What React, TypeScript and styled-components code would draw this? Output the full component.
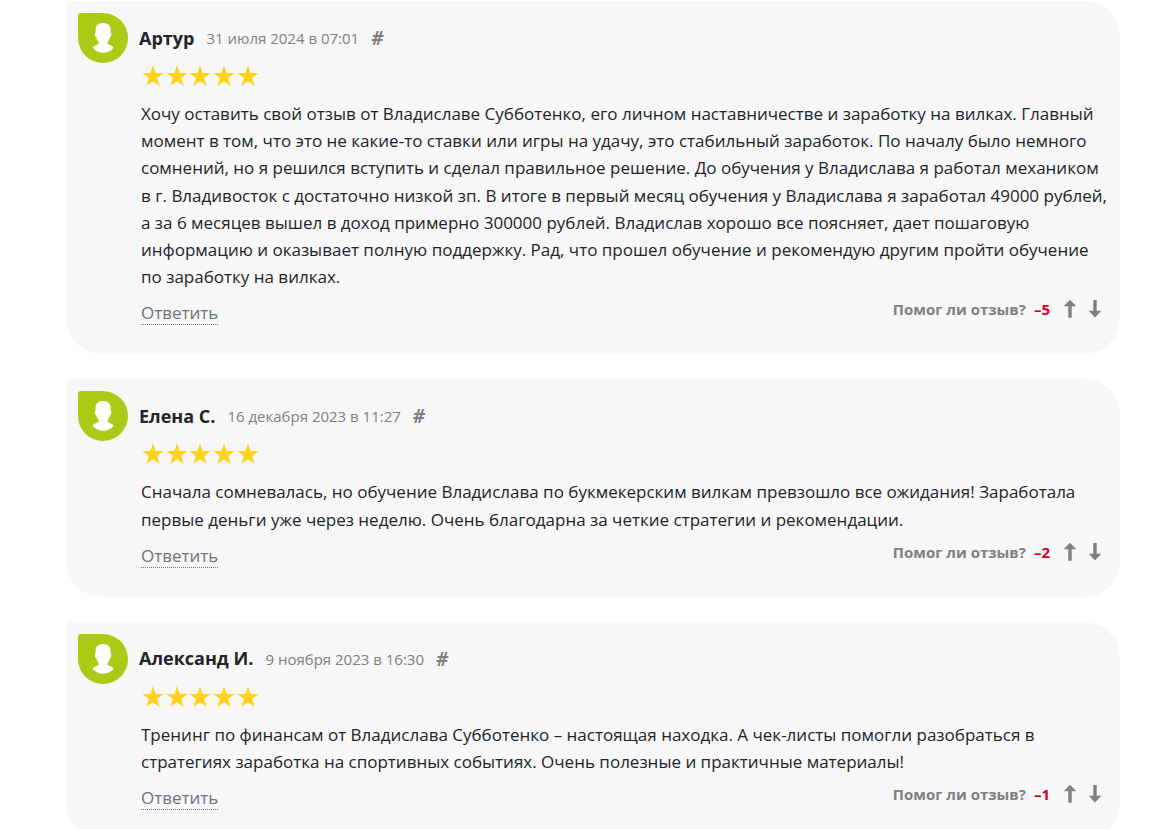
import React from "react";
import styled, { createGlobalStyle } from "styled-components";

const GlobalStyle = createGlobalStyle`
  * { box-sizing: border-box; }
  body {
    margin: 0;
    background: #fff;
    color: #212529;
    font-family: "Open Sans", "Noto Sans", sans-serif;
    font-size: 17px;
    line-height: 1.6;
  }
`;

const ReviewList = styled.main`
  display: flex;
  flex-direction: column;
  gap: 25px;
  padding: 1px 34px 25px 66px;
`;

const Card = styled.article`
  display: flex;
  gap: 11px;
  padding: 12px 12px 29px;
  background: #f7f7f7;
  border-radius: 5px 36px 36px 36px;
`;

const Avatar = styled.div`
  flex: none;
  width: 50px;
  height: 50px;
  background: #aacc17;
  border-radius: 3px 25px 25px 25px;
`;

const Body = styled.div`
  flex: 1;
  min-width: 0;
`;

const Header = styled.header`
  display: flex;
  align-items: center;
  height: 50px;
`;

const Author = styled.h2`
  margin: 0 12px 0 0;
  font-size: 18px;
  font-weight: 700;
`;

const PostedAt = styled.time`
  margin-right: 12px;
  color: #808080;
  font-size: 15px;
`;

const Permalink = styled.a`
  color: #808080;
  font-size: 19px;
  font-style: italic;
  font-weight: 700;
  line-height: 24px;
  text-decoration: none;
`;

const Stars = styled.svg`
  display: block;
  width: 119px;
  height: 24px;
  margin: 1px 0 12px 2px;
  fill: #ffd21e;
`;

const Text = styled.p`
  margin: 0;
  padding-left: 2px;
`;

const Footer = styled.footer`
  display: flex;
  align-items: flex-start;
  justify-content: space-between;
  margin-top: 9px;
  padding-left: 2px;
`;

const Reply = styled.a`
  margin-top: 2px;
  color: #6c757d;
  line-height: 23px;
  text-decoration: none;
  border-bottom: 1px dotted #6c757d;
`;

const Votes = styled.div`
  display: flex;
  align-items: center;
  height: 20px;
  padding-right: 6px;
  color: #808080;
  font-size: 15px;
  font-weight: 700;
`;

const Score = styled.span`
  margin: 0 13px 0 8px;
  color: #d0021b;
`;

const VoteButton = styled.button`
  display: flex;
  width: 14px;
  height: 20px;
  margin: 0;
  padding: 0;
  border: 0;
  background: none;
  color: inherit;
  cursor: pointer;

  & + & { margin-left: 11px; }
`;

const Person = () => (
  <svg width="50" height="50" viewBox="0 0 50 50" fill="#fff" aria-hidden="true">
    <path d="M25 10c-5.200 0-7.500 3-7.400 7.300v2.200c-.9.300-.9 1.300-.6 2.700.2 1.200.7 2 1.400 2.200.3 1.900 1 3.200 2.300 4.600v1.300c-.4 1.900-5.300 1.900-6 4.500C17.300 38.200 21.200 39.800 25.200 39.800s7.900-1.600 10.300-5c-.7-2.600-5.600-2.600-6-4.500v-1.300c1.300-1.400 2-2.700 2.300-4.600.7-.2 1.200-1 1.400-2.200.3-1.400.3-2.400-.6-2.700v-2.200C32.700 13 30.400 10 25 10z" />
  </svg>
);

const starOffsets = [0, 24, 47, 71, 95];

const Rating = () => (
  <Stars viewBox="0 0 119 24" role="img" aria-label="5 из 5">
    {starOffsets.map((x) => (
      <polygon
        key={x}
        transform={`translate(${x} 0)`}
        points="12,1 14.600,9 22.600,9 16.200,14 18.700,22 12,17.200 5.300,22 7.800,14 1.400,9 9.400,9"
      />
    ))}
  </Stars>
);

const Arrow = ({ down = false }: { down?: boolean }) => (
  <svg width="14" height="20" viewBox="0 0 14 20" fill="currentColor" aria-hidden="true">
    <path
      d={
        down
          ? "M5.300 1h3.400v10.700H13.300L7 18.500.7 11.700H5.300z"
          : "M7 .700l6.300 6.500H8.700v11.500H5.300V7.200H.7z"
      }
    />
  </svg>
);

interface Review {
  id: string;
  author: string;
  date: string;
  postedAt: string;
  text: string;
  score: string;
}

const reviews: Review[] = [
  {
    id: "review-1",
    author: "Артур",
    date: "2024-07-31T07:01",
    postedAt: "31 июля 2024 в 07:01",
    text: "Хочу оставить свой отзыв от Владиславе Субботенко, его личном наставничестве и заработку на вилках. Главный момент в том, что это не какие-то ставки или игры на удачу, это стабильный заработок. По началу было немного сомнений, но я решился вступить и сделал правильное решение. До обучения у Владислава я работал механиком в г. Владивосток с достаточно низкой зп. В итоге в первый месяц обучения у Владислава я заработал 49000 рублей, а за 6 месяцев вышел в доход примерно 300000 рублей. Владислав хорошо все поясняет, дает пошаговую информацию и оказывает полную поддержку. Рад, что прошел обучение и рекомендую другим пройти обучение по заработку на вилках.",
    score: "–5",
  },
  {
    id: "review-2",
    author: "Елена С.",
    date: "2023-12-16T11:27",
    postedAt: "16 декабря 2023 в 11:27",
    text: "Сначала сомневалась, но обучение Владислава по букмекерским вилкам превзошло все ожидания! Заработала первые деньги уже через неделю. Очень благодарна за четкие стратегии и рекомендации.",
    score: "–2",
  },
  {
    id: "review-3",
    author: "Александ И.",
    date: "2023-11-09T16:30",
    postedAt: "9 ноября 2023 в 16:30",
    text: "Тренинг по финансам от Владислава Субботенко – настоящая находка. А чек-листы помогли разобраться в стратегиях заработка на спортивных событиях. Очень полезные и практичные материалы!",
    score: "–1",
  },
];

export default function App() {
  return (
    <>
      <GlobalStyle />
      <ReviewList>
        {reviews.map((r) => (
          <Card key={r.id} id={r.id}>
            <Avatar>
              <Person />
            </Avatar>
            <Body>
              <Header>
                <Author>{r.author}</Author>
                <PostedAt dateTime={r.date}>{r.postedAt}</PostedAt>
                <Permalink href={`#${r.id}`}>#</Permalink>
              </Header>
              <Rating />
              <Text>{r.text}</Text>
              <Footer>
                <Reply href="#reply">Ответить</Reply>
                <Votes>
                  <span>Помог ли отзыв?</span>
                  <Score>{r.score}</Score>
                  <VoteButton type="button" aria-label="Да">
                    <Arrow />
                  </VoteButton>
                  <VoteButton type="button" aria-label="Нет">
                    <Arrow down />
                  </VoteButton>
                </Votes>
              </Footer>
            </Body>
          </Card>
        ))}
      </ReviewList>
    </>
  );
}
